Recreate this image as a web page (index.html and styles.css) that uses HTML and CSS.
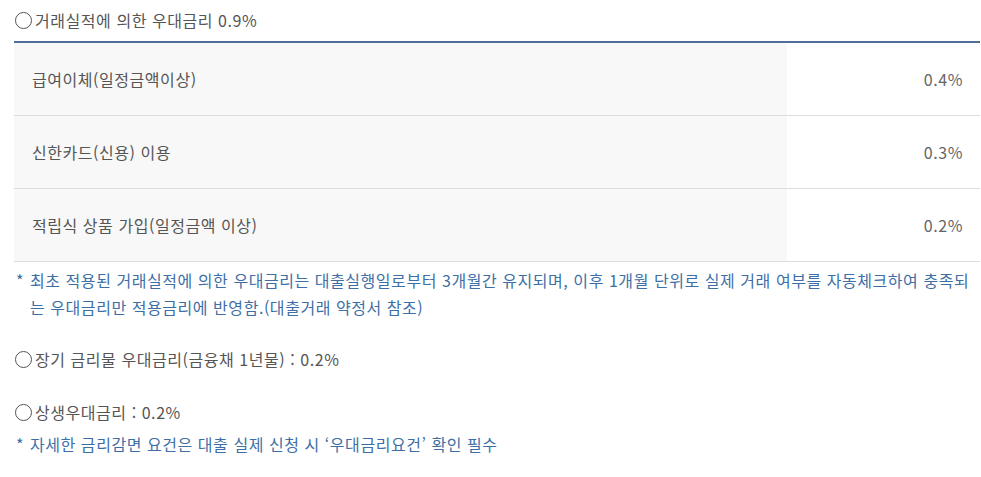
FILE: index.html
```html
<!DOCTYPE html>
<html lang="ko">
<head>
    <meta charset="UTF-8">
    <meta name="viewport" content="width=device-width, initial-scale=1.0">
    <title>우대금리 안내</title>
    <link rel="stylesheet" href="styles.css">
</head>
<body>
    <div class="rate-info">
        <h3 class="rate-title"><span class="circle"></span>거래실적에 의한 우대금리 0.9%</h3>

        <table class="rate-table">
            <tr>
                <th>급여이체(일정금액이상)</th>
                <td>0.4%</td>
            </tr>
            <tr>
                <th>신한카드(신용) 이용</th>
                <td>0.3%</td>
            </tr>
            <tr>
                <th>적립식 상품 가입(일정금액 이상)</th>
                <td>0.2%</td>
            </tr>
        </table>

        <p class="note">* <span>최초 적용된 거래실적에 의한 우대금리는 대출실행일로부터 3개월간 유지되며, 이후 1개월 단위로 실제 거래 여부를 자동체크하여 충족되는 우대금리만 적용금리에 반영함.(대출거래 약정서 참조)</span></p>

        <p class="rate-item"><span class="circle"></span>장기 금리물 우대금리(금융채 1년물) : 0.2%</p>

        <p class="rate-item last"><span class="circle"></span>상생우대금리 : 0.2%</p>
        <p class="note">* <span>자세한 금리감면 요건은 대출 실제 신청 시 ‘우대금리요건’ 확인 필수</span></p>
    </div>
</body>
</html>
```

FILE: styles.css
```css
body {
    margin: 0;
    padding: 0 1px 0 14px;
    background-color: #fff;
    font-family: "Noto Sans CJK KR", "Noto Sans", sans-serif;
    font-size: 16px;
    letter-spacing: 0.55px;
    color: #555;
}
.circle {
    display: inline-block;
    width: 15px;
    height: 15px;
    margin: 0 3px 0 1px;
    border: 1px solid #555;
    border-radius: 50%;
    vertical-align: -2px;
}
.rate-title {
    margin: 0;
    padding: 7px 0 8px 0;
    font-size: 16px;
    font-weight: normal;
    line-height: 26px;
    color: #555;
}
.rate-table {
    width: 100%;
    border-collapse: collapse;
    border-top: 2px solid #4e6f98;
}
.rate-table th,
.rate-table td {
    height: 72px;
    padding: 0;
    border-bottom: 1px solid #ddd;
    font-weight: normal;
    vertical-align: middle;
}
.rate-table th {
    width: 755px;
    padding-left: 18px;
    text-align: left;
    background-color: #f8f8f8;
    color: #555;
}
.rate-table td {
    padding-right: 17px;
    text-align: right;
    color: #666;
}
.note {
    display: flex;
    gap: 6px;
    margin: 5px 0 0 2px;
    line-height: 27px;
    color: #3d6fa6;
}
.rate-item {
    margin: 25px 0 0 0;
    line-height: 27px;
    color: #555;
}
.rate-item.last {
    margin-top: 26px;
}
```
